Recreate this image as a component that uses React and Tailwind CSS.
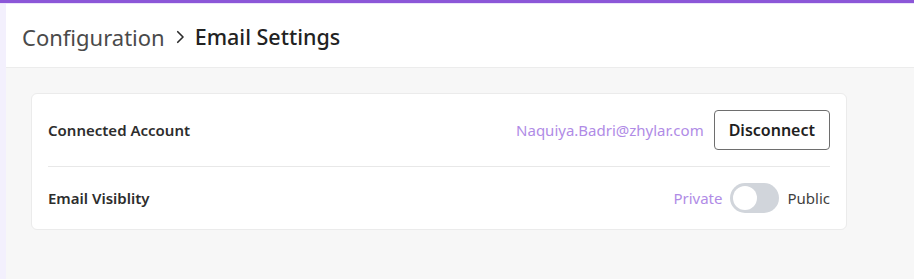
import React, { useState } from "react";

const App = () => {
  const [isPublic, setIsPublic] = useState(false);

  return (
    <div
      className="min-h-[279px] flex flex-col bg-[#f3f0fd]"
      style={{ fontFamily: '"Noto Sans", "Open Sans", sans-serif' }}
    >
      <div className="h-[3px] bg-[#8c57d8]" />
      <div className="h-px bg-[#ebe4fb]" />
      <div className="flex-1 flex pl-[6px]">
        <div className="flex-1 flex flex-col bg-[#f7f7f7]">
          <div className="h-[64px] bg-white border-b border-[#ececec] flex items-center px-4 pt-[3px] gap-[6px]">
            <span className="text-[22px] text-[#4a4a4a]">Configuration</span>
            <svg
              width="18"
              height="18"
              viewBox="0 0 24 24"
              fill="none"
              stroke="#2b2b2b"
              strokeWidth="2.2"
              strokeLinecap="round"
              strokeLinejoin="round"
            >
              <path d="M9 5l7 7-7 7" />
            </svg>
            <span className="text-[21.5px] font-medium text-[#222]">
              Email Settings
            </span>
          </div>
          <div className="flex-1 px-[25px] pt-[25px] pb-[50px]">
            <div className="w-[816px] bg-white border border-[#ebebeb] rounded-md px-4">
              <div className="flex items-center justify-between py-4 border-b border-[#e8e8e8]">
                <span className="text-[15px] font-semibold text-[#2d2d2d]">
                  Connected Account
                </span>
                <div className="flex items-center gap-[10px]">
                  <span className="text-[15px] text-[#b08be6]">
                    Naquiya.Badri@zhylar.com
                  </span>
                  <button className="h-[40px] px-[14px] border border-[#6e6e6e] rounded text-base font-semibold text-[#1f1f1f]">
                    Disconnect
                  </button>
                </div>
              </div>
              <div className="flex items-center justify-between py-4">
                <span className="text-[15px] font-semibold text-[#2d2d2d]">
                  Email Visiblity
                </span>
                <div className="flex items-center gap-2">
                  <span className="text-[15px] text-[#b08be6]">Private</span>
                  <button
                    onClick={() => setIsPublic(!isPublic)}
                    className={`w-[49px] h-[30px] rounded-full p-[3px] flex items-center ${
                      isPublic ? "bg-[#8c57d8] justify-end" : "bg-[#d1d5db] justify-start"
                    }`}
                  >
                    <span className="w-[24px] h-[24px] rounded-full bg-white" />
                  </button>
                  <span className="text-[15px] text-[#3f3f3f]">Public</span>
                </div>
              </div>
            </div>
          </div>
        </div>
      </div>
    </div>
  );
};

export default App;
